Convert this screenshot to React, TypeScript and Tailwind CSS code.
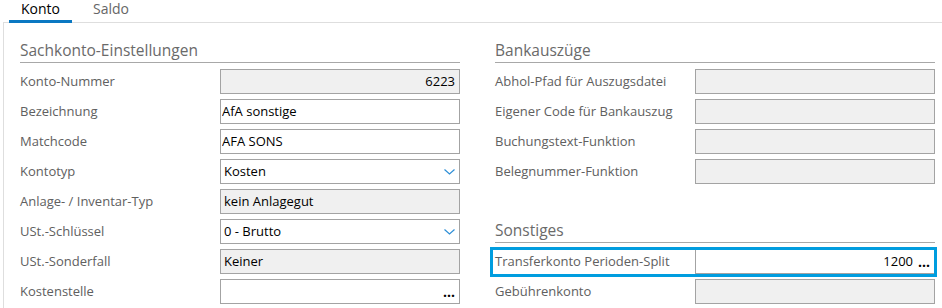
import React from "react";

const font = { fontFamily: '"Segoe UI", "Open Sans", "Noto Sans", sans-serif' };

function Chevron() {
  return (
    <svg width="11" height="6" viewBox="0 0 11 6" className="shrink-0">
      <polyline points="0.5,0.5 5.5,5 10.5,0.5" fill="none" stroke="#2f8fd6" strokeWidth="1.2" />
    </svg>
  );
}

type FieldProps = {
  label: string;
  value?: string;
  disabled?: boolean;
  align?: "left" | "right";
  kind?: "text" | "select" | "lookup" | "plain";
};

function Field({ label, value = "", disabled = false, align = "left", kind = "text" }: FieldProps) {
  return (
    <div className="flex h-[25px] items-center">
      <div className="w-[200px] shrink-0 whitespace-nowrap text-[13px] leading-[25px] text-[#606060]">{label}</div>
      <div
        className={
          "flex h-[25px] w-[240px] items-center border border-[#a3a3a3] text-[13px] text-black " +
          (disabled ? "bg-[#f0f0f0] " : "bg-white ") +
          (kind === "text" ? "pl-[1px] pr-[4px]" : "pl-[3px] pr-[4px]")
        }
      >
        <span className={"flex-1 truncate " + (align === "right" ? "text-right" : "text-left")}>{value}</span>
        {kind === "select" && <Chevron />}
        {kind === "lookup" && (
          <span className="ml-[5px] text-[14px] font-bold leading-none text-black">...</span>
        )}
      </div>
    </div>
  );
}

function Header({ title }: { title: string }) {
  return (
    <div className="h-[25px] whitespace-nowrap border-b border-[#a8a8a8] text-[15.5px] leading-[24px] text-[#6a6a6a]">
      {title}
    </div>
  );
}

export default function App() {
  return (
    <div className="h-[308px] w-[942px] overflow-hidden bg-white" style={font}>
      <div className="relative z-10 flex h-[23px] pl-[9px]">
        <div className="h-[23px] w-[63px] border-b-[3px] border-[#0a78c2] text-center text-[14px] leading-[18px] text-black">
          Konto
        </div>
        <div className="h-[23px] pl-[21px] text-[14px] leading-[18px] text-[#666666]">Saldo</div>
      </div>
      <div className="-mt-[1px] ml-[3px] h-[300px] border-l border-t border-[#dedede] pl-[16px] pt-[15px]">
        <div className="flex gap-[35px]">
          <div className="flex w-[440px] flex-col">
            <Header title="Sachkonto-Einstellungen" />
            <div className="mt-[6px] flex flex-col gap-[5px]">
              <Field label="Konto-Nummer" value="6223" disabled align="right" />
              <Field label="Bezeichnung" value="AfA sonstige" />
              <Field label="Matchcode" value="AFA SONS" />
              <Field label="Kontotyp" value="Kosten" kind="select" />
              <Field label="Anlage- / Inventar-Typ" value="kein Anlagegut" disabled kind="plain" />
              <Field label="USt.-Schlüssel" value="0 - Brutto" kind="select" />
              <Field label="USt.-Sonderfall" value="Keiner" disabled kind="plain" />
              <Field label="Kostenstelle" kind="lookup" />
            </div>
          </div>
          <div className="flex w-[440px] flex-col">
            <Header title="Bankauszüge" />
            <div className="mt-[6px] flex flex-col gap-[5px]">
              <Field label="Abhol-Pfad für Auszugsdatei" disabled />
              <Field label="Eigener Code für Bankauszug" disabled />
              <Field label="Buchungstext-Funktion" disabled />
              <Field label="Belegnummer-Funktion" disabled />
            </div>
            <div className="mt-[34px]">
              <Header title="Sonstiges" />
            </div>
            <div className="mt-[6px] flex flex-col gap-[5px]">
              <div className="relative">
                <Field label="Transferkonto Perioden-Split" value="1200" align="right" kind="lookup" />
                <span className="pointer-events-none absolute -bottom-[3px] -left-[5px] -right-[2px] -top-[2px] border-[3px] border-[#009ddf]" />
              </div>
              <Field label="Gebührenkonto" disabled />
            </div>
          </div>
        </div>
      </div>
    </div>
  );
}
